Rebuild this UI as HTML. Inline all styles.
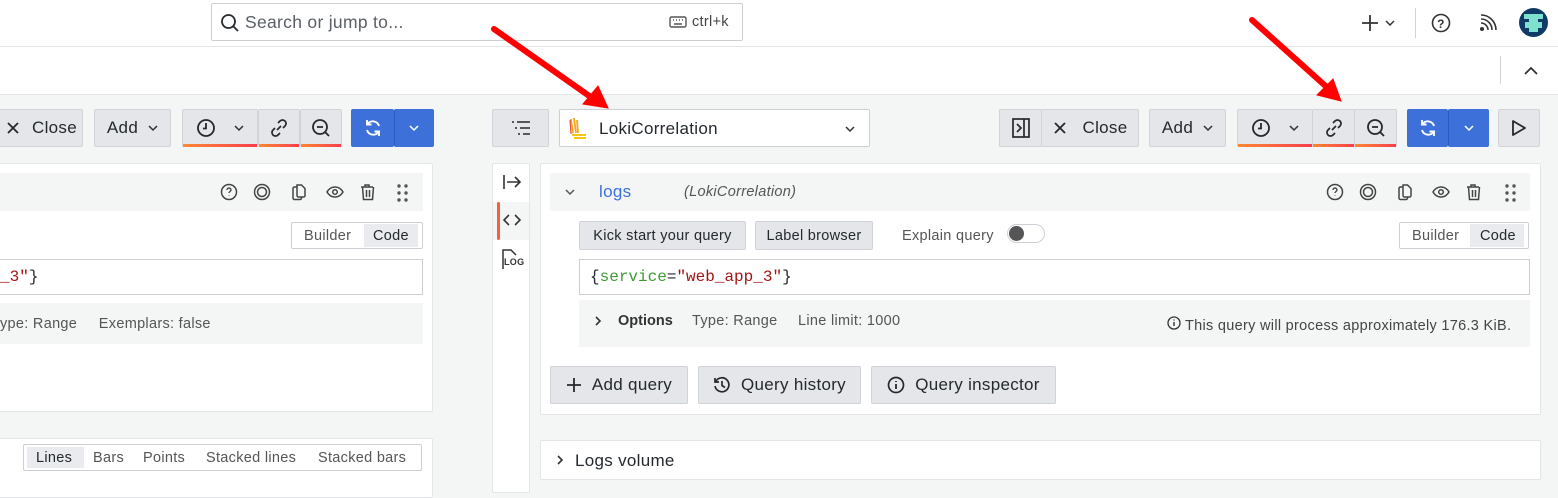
<!DOCTYPE html>
<html><head><meta charset="utf-8"><style>
*{box-sizing:border-box;margin:0;padding:0}
body{width:1558px;height:483px;overflow:hidden;background:#f4f5f5;font-family:"Liberation Sans",sans-serif;font-size:15px;color:#24292e;position:relative;letter-spacing:.3px}
.a{position:absolute}
.btn{position:absolute;background:#e4e6e9;border:1px solid #d0d3d8;border-radius:2px;display:flex;align-items:center;justify-content:center;font-size:17px;color:#24292e;gap:10px}
.pnl{position:absolute;background:#fff;border:1px solid #e3e5e8;border-radius:2px}
.gray{position:absolute;background:#f4f5f5}
.sm{font-size:14.5px}
svg{display:block}
.ul{position:absolute;bottom:-1px;height:3px;left:0;right:0;background:linear-gradient(90deg,#ff8833,#f53e4c)}
.mono{font-family:"Liberation Mono",monospace;font-size:16px;letter-spacing:0}
</style></head><body>
<svg width="0" height="0" style="position:absolute"><defs>
<g id="icons" fill="none" stroke="#444" stroke-width="1.5">
<circle cx="9" cy="9" r="7.5"/><path d="M7 7a2 2 0 114 0c0 1.5-2 1.5-2 3M9 12.5v.5" stroke-width="1.4"/>
<circle cx="42" cy="9" r="7.5"/><circle cx="42" cy="9" r="4.5"/>
<path d="M77 4h-2.5a1.5 1.5 0 00-1.5 1.5V15a1.5 1.5 0 001.5 1.5H80a1.5 1.5 0 001.5-1.5v-1M77 2h4.5l3.5 3.5V12.5a1.5 1.5 0 01-1.5 1.5H78.5A1.5 1.5 0 0177 12.5z"/>
<path d="M107 9c2-3.5 4.5-5 8-5s6 1.5 8 5c-2 3.5-4.5 5-8 5s-6-1.5-8-5z"/><circle cx="115" cy="9" r="2.3"/>
<path d="M141 4h12M145 4V2h4v2M142.5 4l1 12.5h9l1-12.5M146.5 7v7M149.5 7v7"/>
</g>
<g id="dots" fill="#555"><circle cx="2" cy="2" r="1.7"/><circle cx="9" cy="2" r="1.7"/><circle cx="2" cy="9" r="1.7"/><circle cx="9" cy="9" r="1.7"/><circle cx="2" cy="16" r="1.7"/><circle cx="9" cy="16" r="1.7"/></g>
</defs></svg>
<!-- top bar -->
<div class="a" style="left:0;top:0;width:1558px;height:47px;background:#fff;border-bottom:1px solid #e3e5e8"></div>
<div class="a" style="left:211px;top:3px;width:532px;height:38px;border:1px solid #ccd0d5;border-radius:2px;background:#fff"></div>
<svg class="a" style="left:220px;top:13px" width="20" height="20" viewBox="0 0 20 20"><circle cx="8.5" cy="8.5" r="6.5" fill="none" stroke="#24292e" stroke-width="1.8"/><path d="M13.5 13.5L18 18" stroke="#24292e" stroke-width="1.8"/></svg>
<div class="a" style="left:245px;top:12px;font-size:17.5px;color:#5a5f66">Search or jump to...</div>
<svg class="a" style="left:669px;top:16px" width="18" height="12"><rect x="1" y="1" width="16" height="10" rx="1.5" fill="none" stroke="#555" stroke-width="1.4"/><path d="M4 4h1M7 4h1M10 4h1M13 4h1M5 8h8" stroke="#555" stroke-width="1.4"/></svg>
<div class="a sm" style="left:692px;top:14px;color:#444">ctrl+k</div>
<svg class="a" style="left:1360px;top:13px" width="40" height="20"><path d="M10 2v16M2 10h16" stroke="#333" stroke-width="1.8"/><path d="M26 8l4 4 4-4" fill="none" stroke="#333" stroke-width="1.5"/></svg>
<div class="a" style="left:1415px;top:8px;width:1px;height:30px;background:#d0d3d8"></div>
<svg class="a" style="left:1431px;top:13px" width="20" height="20"><circle cx="10" cy="10" r="8.5" fill="none" stroke="#333" stroke-width="1.6"/><text x="10" y="15" font-size="12" text-anchor="middle" font-family="Liberation Sans" font-weight="bold" fill="#333">?</text></svg>
<svg class="a" style="left:1479px;top:14px" width="18" height="18"><circle cx="3" cy="15" r="2" fill="#333"/><path d="M2 9a7 7 0 017 7M2 5a11 11 0 0111 11M2 1a15 15 0 0115 15" fill="none" stroke="#333" stroke-width="1.6"/></svg>
<div class="a" style="left:1519px;top:8px;width:29px;height:29px;border-radius:50%;background:#0f3a66;overflow:hidden"><div class="a" style="left:5px;top:6px;width:19px;height:5px;background:#7fe0d0"></div><div class="a" style="left:10px;top:10px;width:9px;height:14px;background:#7fe0d0"></div><div class="a" style="left:6px;top:14px;width:17px;height:6px;background:#7fe0d0"></div></div>
<!-- second bar -->
<div class="a" style="left:0;top:47px;width:1558px;height:48px;background:#fff;border-bottom:1px solid #e3e5e8"></div>
<div class="a" style="left:1500px;top:56px;width:1px;height:28px;background:#d0d3d8"></div>
<svg class="a" style="left:1523px;top:66px" width="16" height="10"><path d="M2 8l6-6 6 6" fill="none" stroke="#333" stroke-width="1.8"/></svg>

<!-- LEFT pane toolbar -->
<div class="btn" style="left:-10px;top:109px;width:93px;height:38px;padding-left:10px;gap:12px"><svg width="14" height="14"><path d="M2 2l10 10M12 2L2 12" stroke="#24292e" stroke-width="1.8"/></svg>Close</div>
<div class="btn" style="left:94px;top:109px;width:77px;height:38px">Add <svg width="10" height="8"><path d="M1 2l4 4 4-4" fill="none" stroke="#333" stroke-width="1.5"/></svg></div>
<div class="btn" style="left:182px;top:109px;width:76px;height:38px;gap:18px"><svg width="20" height="20"><circle cx="10" cy="10" r="8" fill="none" stroke="#24292e" stroke-width="1.8"/><path d="M10 5v5.5H7" fill="none" stroke="#24292e" stroke-width="1.8"/></svg><svg width="10" height="8"><path d="M1 2l4 4 4-4" fill="none" stroke="#333" stroke-width="1.5"/></svg><div class="ul"></div></div>
<div class="btn" style="left:258px;top:109px;width:42px;height:38px"><svg width="20" height="20"><path d="M8 12l4-4M9 5l2-2a3.5 3.5 0 015 5l-2 2M11 15l-2 2a3.5 3.5 0 01-5-5l2-2" fill="none" stroke="#24292e" stroke-width="1.7"/></svg><div class="ul"></div></div>
<div class="btn" style="left:300px;top:109px;width:42px;height:38px"><svg width="20" height="20"><circle cx="9" cy="9" r="7" fill="none" stroke="#24292e" stroke-width="1.8"/><path d="M6 9h6M14 14l4 4" stroke="#24292e" stroke-width="1.8"/></svg><div class="ul"></div></div>
<div class="btn" style="left:351px;top:109px;width:43px;height:38px;background:#3d71d9;border-color:#3d71d9"><svg width="20" height="20"><path d="M16 8A6.5 6.5 0 004.5 6M4 12a6.5 6.5 0 0011.5 2M4 2v4.5h4.5M16 18v-4.5h-4.5" fill="none" stroke="#fff" stroke-width="1.9"/></svg></div>
<div class="btn" style="left:394px;top:109px;width:40px;height:38px;background:#3d71d9;border-color:#3d71d9;border-left:1px solid #2c5bbd"><svg width="10" height="8"><path d="M1 2l4 4 4-4" fill="none" stroke="#fff" stroke-width="1.5"/></svg></div>
<!-- left panel -->
<div class="pnl" style="left:-5px;top:163px;width:438px;height:249px"></div>
<div class="gray" style="left:0;top:173px;width:423px;height:38px"></div>
<svg class="a" style="left:220px;top:183px" width="160" height="19"><use href="#icons"/></svg>
<svg class="a" style="left:397px;top:184px" width="12" height="19"><use href="#dots"/></svg>
<div class="pnl" style="left:291px;top:222px;width:132px;height:27px;border-color:#ccd0d5"></div>
<div class="a sm" style="left:304px;top:228px;color:#555">Builder</div>
<div class="a" style="left:364px;top:224px;width:54px;height:23px;background:#e9ebee"></div>
<div class="a sm" style="left:373px;top:228px">Code</div>
<div class="a" style="left:-2px;top:259px;width:425px;height:36px;background:#fff;border:1px solid #ccd0d5"></div>
<div class="a mono" style="left:0;top:268px"><span style="color:#a31515">_3"</span>}</div>
<div class="gray" style="left:0;top:303px;width:423px;height:41px"></div>
<div class="a sm" style="left:0;top:316px;color:#555">ype: Range&nbsp;&nbsp;&nbsp;&nbsp;&nbsp;Exemplars: false</div>
<div class="pnl" style="left:-5px;top:438px;width:438px;height:60px"></div>
<div class="a" style="left:23px;top:444px;width:399px;height:27px;border:1px solid #ccd0d5;border-radius:2px"></div>
<div class="a" style="left:27px;top:447px;width:57px;height:21px;background:#e9ebee"></div>
<div class="a sm" style="left:36px;top:450px">Lines</div>
<div class="a sm" style="left:93px;top:450px;color:#555">Bars</div>
<div class="a sm" style="left:143px;top:450px;color:#555">Points</div>
<div class="a sm" style="left:206px;top:450px;color:#555">Stacked lines</div>
<div class="a sm" style="left:318px;top:450px;color:#555">Stacked bars</div>

<!-- RIGHT pane toolbar -->
<div class="btn" style="left:492px;top:109px;width:57px;height:38px"><svg width="20" height="14"><path d="M1 1h2M6 1h13M4 7h2M9 7h10M7 13h2M12 13h7" stroke="#24292e" stroke-width="1.6"/></svg></div>
<div class="a" style="left:559px;top:109px;width:311px;height:38px;background:#fff;border:1px solid #ccd0d5;border-radius:2px"></div>
<svg class="a" style="left:568px;top:117px" width="22" height="24"><path d="M3 2l2 14M6 1l2 15M9 3l1 13" stroke="#f5a623" stroke-width="1.8"/><path d="M4 18h14M6 21h12" stroke="#f5c518" stroke-width="2"/><path d="M2 3l1 14" stroke="#e8543a" stroke-width="1.2"/></svg>
<div class="a" style="left:599px;top:119px;font-size:17px">LokiCorrelation</div>
<svg class="a" style="left:845px;top:125px" width="10" height="8"><path d="M1 2l4 4 4-4" fill="none" stroke="#333" stroke-width="1.5"/></svg>

<div class="btn" style="left:999px;top:109px;width:43px;height:38px"><svg width="18" height="20"><rect x="1" y="1" width="16" height="18" fill="none" stroke="#24292e" stroke-width="1.7"/><path d="M12 1v18M5 6l4 4-4 4" fill="none" stroke="#24292e" stroke-width="1.7"/></svg></div>
<div class="btn" style="left:1041px;top:109px;width:98px;height:38px;gap:16px"><svg width="14" height="14"><path d="M2 2l10 10M12 2L2 12" stroke="#24292e" stroke-width="1.8"/></svg>Close</div>
<div class="btn" style="left:1149px;top:109px;width:77px;height:38px">Add <svg width="10" height="8"><path d="M1 2l4 4 4-4" fill="none" stroke="#333" stroke-width="1.5"/></svg></div>
<div class="btn" style="left:1237px;top:109px;width:76px;height:38px;gap:18px"><svg width="20" height="20"><circle cx="10" cy="10" r="8" fill="none" stroke="#24292e" stroke-width="1.8"/><path d="M10 5v5.5H7" fill="none" stroke="#24292e" stroke-width="1.8"/></svg><svg width="10" height="8"><path d="M1 2l4 4 4-4" fill="none" stroke="#333" stroke-width="1.5"/></svg><div class="ul"></div></div>
<div class="btn" style="left:1312px;top:109px;width:43px;height:38px"><svg width="20" height="20"><path d="M8 12l4-4M9 5l2-2a3.5 3.5 0 015 5l-2 2M11 15l-2 2a3.5 3.5 0 01-5-5l2-2" fill="none" stroke="#24292e" stroke-width="1.7"/></svg><div class="ul"></div></div>
<div class="btn" style="left:1354px;top:109px;width:43px;height:38px"><svg width="20" height="20"><circle cx="9" cy="9" r="7" fill="none" stroke="#24292e" stroke-width="1.8"/><path d="M6 9h6M14 14l4 4" stroke="#24292e" stroke-width="1.8"/></svg><div class="ul"></div></div>
<div class="btn" style="left:1407px;top:109px;width:41px;height:38px;background:#3d71d9;border-color:#3d71d9"><svg width="20" height="20"><path d="M16 8A6.5 6.5 0 004.5 6M4 12a6.5 6.5 0 0011.5 2M4 2v4.5h4.5M16 18v-4.5h-4.5" fill="none" stroke="#fff" stroke-width="1.9"/></svg></div>
<div class="btn" style="left:1448px;top:109px;width:41px;height:38px;background:#3d71d9;border-color:#3d71d9;border-left:1px solid #2c5bbd"><svg width="10" height="8"><path d="M1 2l4 4 4-4" fill="none" stroke="#fff" stroke-width="1.5"/></svg></div>
<div class="btn" style="left:1498px;top:109px;width:42px;height:38px"><svg width="16" height="18"><path d="M2 2l12 7-12 7z" fill="none" stroke="#24292e" stroke-width="1.8" stroke-linejoin="round"/></svg></div>

<!-- sidebar -->
<div class="pnl" style="left:492px;top:163px;width:38px;height:330px"></div>
<svg class="a" style="left:502px;top:174px" width="20" height="16"><path d="M2 1v14M5 8h13M13 3l5 5-5 5" fill="none" stroke="#333" stroke-width="1.6"/></svg>
<div class="a" style="left:493px;top:202px;width:36px;height:38px;background:#f4f5f5"></div>
<div class="a" style="left:497px;top:202px;width:3px;height:38px;background:#f55f3e;border-radius:2px"></div>
<svg class="a" style="left:503px;top:213px" width="18" height="14"><path d="M6 2L1 7l5 5M12 2l5 5-5 5" fill="none" stroke="#333" stroke-width="1.6"/></svg>
<svg class="a" style="left:501px;top:248px" width="24" height="22"><path d="M2 21V2h8l5 5" fill="none" stroke="#333" stroke-width="1.5"/><text x="3" y="17" font-size="9" font-weight="bold" font-family="Liberation Sans" fill="#333">LOG</text></svg>

<!-- main panel -->
<div class="pnl" style="left:540px;top:163px;width:1001px;height:252px"></div>
<div class="gray" style="left:550px;top:173px;width:980px;height:38px"></div>
<svg class="a" style="left:565px;top:188px" width="10" height="8"><path d="M1 2l4 4 4-4" fill="none" stroke="#555" stroke-width="1.5"/></svg>
<div class="a" style="left:599px;top:182px;font-size:17px;color:#3d71d9">logs</div>
<div class="a sm" style="left:684px;top:184px;color:#555;font-style:italic">(LokiCorrelation)</div>
<svg class="a" style="left:1326px;top:183px" width="160" height="19"><use href="#icons"/></svg>
<svg class="a" style="left:1505px;top:184px" width="12" height="19"><use href="#dots"/></svg>
<div class="btn" style="left:579px;top:221px;width:167px;height:29px;font-size:14.5px">Kick start your query</div>
<div class="btn" style="left:755px;top:221px;width:118px;height:29px;font-size:14.5px">Label browser</div>
<div class="a sm" style="left:902px;top:228px;color:#555">Explain query</div>
<div class="a" style="left:1007px;top:224px;width:38px;height:19px;border:1px solid #ccd0d5;border-radius:10px;background:#fff"></div>
<div class="a" style="left:1009px;top:226px;width:15px;height:15px;border-radius:50%;background:#555"></div>
<div class="pnl" style="left:1399px;top:222px;width:130px;height:27px;border-color:#ccd0d5"></div>
<div class="a sm" style="left:1412px;top:228px;color:#555">Builder</div>
<div class="a" style="left:1470px;top:224px;width:54px;height:23px;background:#e9ebee"></div>
<div class="a sm" style="left:1480px;top:228px">Code</div>
<div class="a" style="left:579px;top:259px;width:951px;height:36px;background:#fff;border:1px solid #ccd0d5"></div>
<div class="a mono" style="left:590px;top:268px">{<span style="color:#3d9a33">service</span>=<span style="color:#a31515">"web_app_3"</span>}</div>
<div class="gray" style="left:579px;top:300px;width:951px;height:47px"></div>
<svg class="a" style="left:594px;top:316px" width="8" height="10"><path d="M2 1l4 4-4 4" fill="none" stroke="#333" stroke-width="1.6"/></svg>
<div class="a sm" style="left:618px;top:313px;font-weight:bold;color:#333;letter-spacing:0">Options</div>
<div class="a sm" style="left:692px;top:313px;color:#555">Type: Range</div>
<div class="a sm" style="left:798px;top:313px;color:#555">Line limit: 1000</div>
<svg class="a" style="left:1167px;top:316px" width="14" height="14"><circle cx="7" cy="7" r="6" fill="none" stroke="#333" stroke-width="1.3"/><path d="M7 6v4M7 3.5v1" stroke="#333" stroke-width="1.4"/></svg>
<div class="a sm" style="left:1185px;top:318px;color:#444">This query will process approximately 176.3 KiB.</div>
<div class="btn" style="left:550px;top:366px;width:138px;height:38px;font-size:17px"><svg width="16" height="16"><path d="M8 1v14M1 8h14" stroke="#24292e" stroke-width="1.8"/></svg>Add query</div>
<div class="btn" style="left:698px;top:366px;width:163px;height:38px;font-size:17px"><svg width="18" height="18"><path d="M3 5a7 7 0 11-1 5M2 2v4h4M9 5v4.5l3 2" fill="none" stroke="#24292e" stroke-width="1.7"/></svg>Query history</div>
<div class="btn" style="left:871px;top:366px;width:185px;height:38px;font-size:17px"><svg width="18" height="18"><circle cx="9" cy="9" r="7.5" fill="none" stroke="#24292e" stroke-width="1.7"/><path d="M9 8v5M9 5v1" stroke="#24292e" stroke-width="1.8"/></svg>Query inspector</div>
<div class="pnl" style="left:540px;top:440px;width:1001px;height:40px"></div>
<svg class="a" style="left:556px;top:455px" width="8" height="10"><path d="M2 1l4 4-4 4" fill="none" stroke="#333" stroke-width="1.6"/></svg>
<div class="a" style="left:575px;top:451px;font-size:17px">Logs volume</div>

<!-- red arrows -->
<svg class="a" style="left:0;top:0" width="1558" height="483"><g fill="#f00" stroke="#f00"><path d="M494 29L595 100" stroke-width="6" stroke-linecap="round"/><path d="M608 108L583 104 598 86z"/><path d="M1252 20L1330 90" stroke-width="6" stroke-linecap="round"/><path d="M1341 101L1317 95 1333 79z"/></g></svg>
</body></html>
